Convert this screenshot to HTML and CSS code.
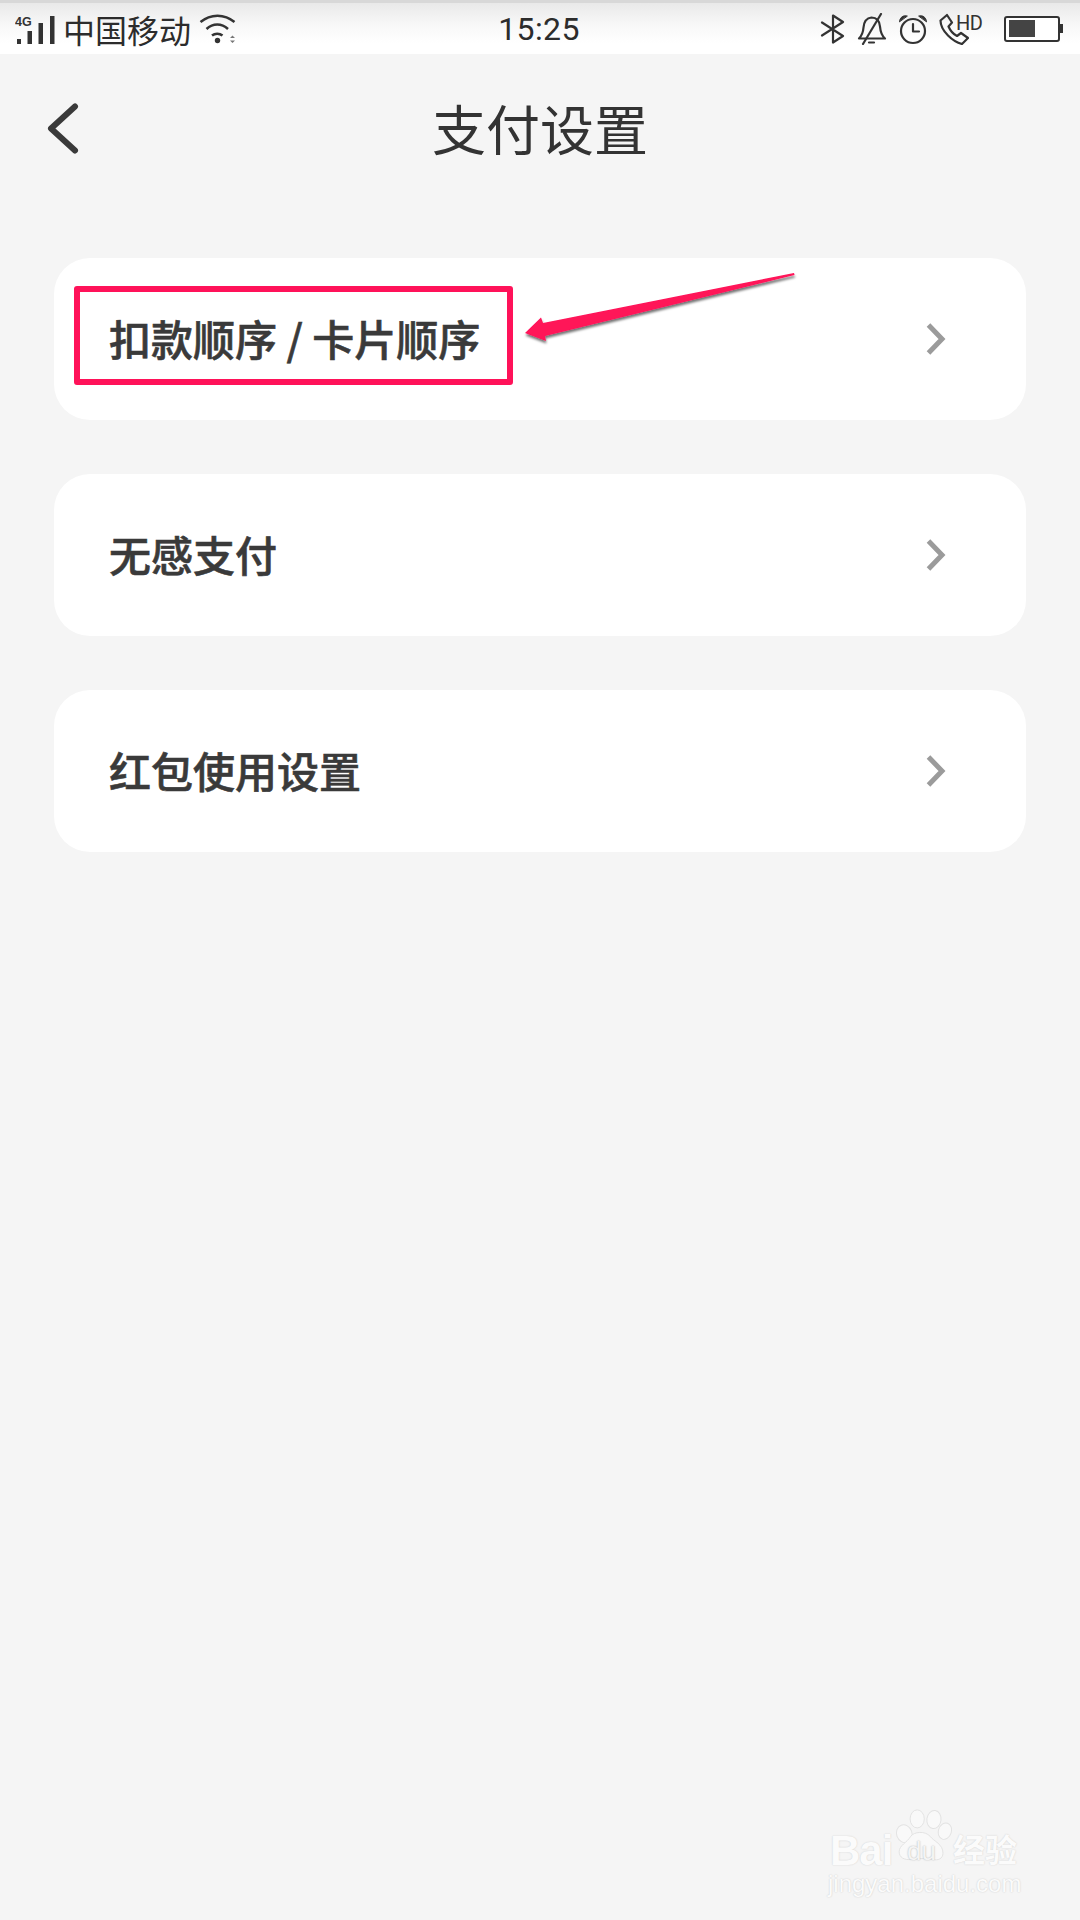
FILE: index.html
```html
<!DOCTYPE html>
<html lang="zh-CN">
<head>
<meta charset="utf-8">
<title>支付设置</title>
<link rel="stylesheet" href="styles.css">
</head>
<body>
<div class="screen">
  <header class="status">
    <div class="status-left">
      <svg class="signal" width="42" height="30" viewBox="0 0 42 30">
        <text x="0" y="10" class="net">4G</text>
        <rect x="2" y="23" width="4" height="5" />
        <rect x="12.500" y="15" width="4.500" height="13" />
        <rect x="23.500" y="7" width="4.500" height="21" />
        <rect x="35" y="0" width="4.500" height="28" />
      </svg>
      <span class="carrier">中国移动</span>
      <svg class="wifi" width="38" height="30" viewBox="0 0 38 30" fill="none">
        <path d="M1.500 8C11.500 -0.500 25.500 -0.500 35.500 8" />
        <path d="M7.500 15C14 9 22.500 9 29 15" />
        <path d="M13 21.500C16 19 20.500 19 23.500 21.500" />
        <circle cx="18.500" cy="26.500" r="2.700" class="dot" />
        <path d="M31 24l2.500-2.500 2.500 2.500zM31 26.500h5l-2.500 2.500z" class="tiny" />
      </svg>
    </div>
    <div class="time">15:25</div>
    <div class="status-right">
      <svg width="26" height="30" viewBox="0 0 26 30" fill="none" class="ico">
        <path d="M2 8.500L23 22 13 28.500V1.500L23 8 2 21.500" />
      </svg>
      <svg width="30" height="32" viewBox="0 0 30 32" fill="none" class="ico">
        <path d="M2 25.500c3-3 4-5 4.500-11C7 8.500 10 5 14.500 4.500c5 0 8 3.500 8.500 9 .5 6 1.500 9 5 12z" />
        <path d="M24 1L6 31" />
        <path d="M12 29.500h5" />
      </svg>
      <svg width="30" height="32" viewBox="0 0 30 32" fill="none" class="ico">
        <circle cx="15" cy="18" r="12" />
        <path d="M15 11v7.500h6" />
        <path d="M1.500 8.500C2 4 5.500 2 9 3zM28.500 8.500C28 4 24.500 2 21 3z" class="solid" />
      </svg>
      <div class="call">
        <svg width="30" height="32" viewBox="0 0 30 32" fill="none" class="ico">
          <path d="M8 2L1.500 7.500c0 6 3.500 11 7.500 15s8 7 14 8.500l6-6-7-5-4 3c-4-2-7-6-8.500-9.500l3.500-4z" />
        </svg>
        <span class="hd">HD</span>
      </div>
      <div class="battery"><div class="battery-body"><div class="battery-fill"></div></div><div class="battery-tip"></div></div>
    </div>
  </header>

  <nav class="nav">
    <svg class="back" width="32" height="58" viewBox="0 0 32 58" fill="none">
      <path d="M28 6.500L4 28.500l24 22" />
    </svg>
    <h1 class="title">支付设置</h1>
  </nav>

  <main class="list">
    <a class="row"><span class="label">扣款顺序 / 卡片顺序</span><svg class="chev" width="20" height="32" viewBox="0 0 20 32" fill="none"><path d="M2.500 2L16 16 2.500 30" /></svg></a>
    <a class="row"><span class="label">无感支付</span><svg class="chev" width="20" height="32" viewBox="0 0 20 32" fill="none"><path d="M2.500 2L16 16 2.500 30" /></svg></a>
    <a class="row"><span class="label">红包使用设置</span><svg class="chev" width="20" height="32" viewBox="0 0 20 32" fill="none"><path d="M2.500 2L16 16 2.500 30" /></svg></a>
  </main>

  <div class="mark-box"></div>
  <svg class="mark-arrow" width="285" height="95" viewBox="0 0 285 95">
    <defs>
      <filter id="sh" x="-10%" y="-20%" width="120%" height="150%"><feDropShadow dx="0.500" dy="2.500" stdDeviation="1.200" flood-color="#000" flood-opacity=".55"/></filter>
    </defs>
    <path d="M274 7L274.500 9 25 70 26 75 5 67 21 51.500 23 57z" fill="#ff1259" filter="url(#sh)"/>
  </svg>

  <div class="watermark">
    <svg class="paw" width="58" height="62" viewBox="0 0 90 80">
      <g class="paw-shape">
        <ellipse cx="16" cy="38" rx="12" ry="14" transform="rotate(-20 16 38)"/>
        <ellipse cx="36" cy="15" rx="11" ry="14"/>
        <ellipse cx="62" cy="16" rx="11" ry="14" transform="rotate(8 62 16)"/>
        <ellipse cx="79" cy="34" rx="10" ry="13" transform="rotate(18 79 34)"/>
        <path d="M8 66c0-10 12-14 18-24 5-7 22-9 30 0 6 8 20 12 20 26 0 9-8 12-16 10-10-2-24-2-34 0-10 1-18-3-18-12z"/>
      </g>
    </svg>
    <div class="wm-top"><span class="wm-bai">Bai</span><span class="wm-du">du</span><span class="wm-cn">经验</span></div>
    <div class="wm-url">jingyan.baidu.com</div>
  </div>
</div>
</body>
</html>
```
FILE: styles.css
```css
* { box-sizing: border-box; }
html, body { margin: 0; padding: 0; }
body {
  width: 1080px;
  height: 1920px;
  overflow: hidden;
  background: #f5f5f5;
  font-family: "Noto Sans CJK SC", "Liberation Sans", sans-serif;
  color: #333;
}
.screen { position: relative; width: 1080px; height: 1920px; }

.status {
  height: 54px;
  padding: 0 17px 0 15px;
  display: grid;
  grid-template-columns: 1fr auto 1fr;
  align-items: center;
  border-top: 3px solid #d8d8d8;
  background: linear-gradient(#e9e9e9 0, #f8f8f8 22px, #fff 40px);
  color: #333;
}
.status-left { display: flex; align-items: center; gap: 6px; }
.signal { margin-top: 4px; }
.signal rect { fill: #333; }
.net { font: 700 12.500px "Liberation Sans", sans-serif; fill: #333; }
.carrier { font-size: 32px; line-height: 40px; color: #2c2c2c; }
.wifi { margin-left: 2px; margin-top: 1px; }
.wifi path { stroke: #333; stroke-width: 2.500px; }
.wifi .dot { fill: #333; stroke: none; }
.wifi .tiny { fill: #777; stroke: none; }
.time { font: 400 32px Roboto, sans-serif; letter-spacing: .4px; color: #2c2c2c; }
.status-right { display: flex; align-items: center; justify-content: flex-end; gap: 11px; }
.ico path, .ico circle { stroke: #333; stroke-width: 2.200px; stroke-linejoin: round; stroke-linecap: round; }
.ico .solid { fill: #333; stroke-width: 1px; }
.call { display: flex; align-items: flex-start; width: 44px; margin-right: 10px; }
.hd { font: 400 20px/20px Roboto, sans-serif; margin-left: -13px; letter-spacing: -.5px; color: #333; }
.battery { display: flex; align-items: center; }
.battery-body { width: 56px; height: 26px; padding: 2.500px; border: 2px solid #333; border-radius: 3px; background: #fff; }
.battery-fill { width: 26px; height: 100%; background: #444; }
.battery-tip { width: 3px; height: 9px; background: #333; }

.nav { position: relative; height: 152px; display: flex; align-items: center; justify-content: center; }
.title { margin: 0; font-size: 54px; line-height: 76px; font-weight: 400; color: #333; transform: translateY(-2px); }
.back { position: absolute; left: 47px; top: 46px; }
.back path { stroke: #3a3a3a; stroke-width: 6px; stroke-linecap: round; stroke-linejoin: round; }

.list { padding: 52px 54px 0; display: flex; flex-direction: column; gap: 54px; }
.row {
  height: 162px;
  padding: 0 80px 0 55px;
  display: flex;
  align-items: center;
  justify-content: space-between;
  background: #fff;
  border-radius: 36px;
}
.label { font-size: 42px; line-height: 60px; font-weight: 500; -webkit-text-stroke: .6px #3a3a3a; color: #3a3a3a; padding-bottom: 3px; box-sizing: content-box; }
.chev path { stroke: #9b9b9b; stroke-width: 5px; stroke-linejoin: miter; }

.mark-box {
  position: absolute;
  left: 74px;
  top: 286px;
  width: 439px;
  height: 99px;
  border: 6px solid #ff1259;
  border-radius: 3px;
}
.mark-arrow { position: absolute; left: 520px; top: 266px; }

.watermark { position: absolute; left: 826px; top: 1800px; width: 200px; height: 100px; color: #fbfbfb; }
.paw { position: absolute; left: 68px; top: 4px; }
.paw-shape { fill: #f9f9f9; stroke: #e2e2e2; stroke-width: 1.500px; }
.wm-top { position: absolute; left: 4px; top: 26px; display: flex; align-items: baseline; height: 50px; text-shadow: 0 0 1.500px #c9c9c9; }
.wm-bai { font: 700 42px/50px "Liberation Sans", sans-serif; width: 77px; letter-spacing: -1px; }
.wm-du { position: relative; top: -5px; font: 400 26px/50px "Liberation Sans", sans-serif; width: 46px; color: #f4f4f4; text-shadow: 0 0 1.500px #aaa; }
.wm-cn { position: relative; top: -3px; font-size: 32px; font-weight: 700; line-height: 50px; }
.wm-url { position: absolute; left: 2px; top: 69px; font: 400 24px/30px "Liberation Sans", sans-serif; text-shadow: 0 0 1.500px #c4c4c4; white-space: nowrap; }
```
